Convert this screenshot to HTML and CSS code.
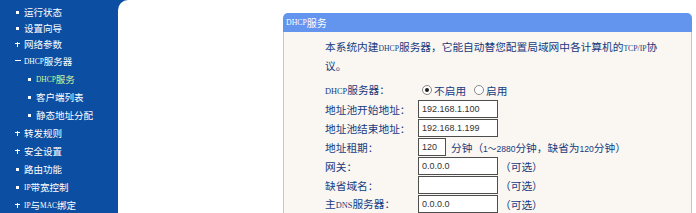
FILE: index.html
```html
<!DOCTYPE html>
<html lang="zh-CN">
<head>
<meta charset="utf-8">
<title>DHCP服务</title>
<link rel="stylesheet" href="styles.css">
</head>
<body>
<div class="page">
  <nav class="side">
    <ul class="menu menu-top">
      <li class="dot">运行状态</li>
      <li class="dot">设置向导</li>
      <li class="plus">网络参数</li>
    </ul>
    <ul class="menu">
      <li class="minus"><span class="en">DHCP</span>服务器</li>
      <li class="dot sub active"><span class="en">DHCP</span>服务</li>
      <li class="dot sub">客户端列表</li>
      <li class="dot sub">静态地址分配</li>
      <li class="plus">转发规则</li>
      <li class="plus">安全设置</li>
      <li class="dot">路由功能</li>
      <li class="dot"><span class="en">IP</span>带宽控制</li>
      <li class="plus"><span class="en">IP</span>与<span class="en">MAC</span>绑定</li>
    </ul>
  </nav>
  <main class="content">
    <section class="panel">
      <div class="panel-head"><span class="en">DHCP</span>服务</div>
      <div class="panel-body">
        <p class="desc">本系统内建<span class="en">DHCP</span>服务器，它能自动替您配置局域网中各计算机的<span class="en">TCP/IP</span>协<br>议。</p>
        <div class="form">
          <div class="label"><span class="en">DHCP</span>服务器：</div>
          <div class="field">
            <label class="opt"><span class="radio on"></span>不启用</label>
            <label class="opt"><span class="radio"></span>启用</label>
          </div>

          <div class="label">地址池开始地址：</div>
          <div class="field"><input class="box" type="text" value="192.168.1.100"></div>

          <div class="label">地址池结束地址：</div>
          <div class="field"><input class="box" type="text" value="192.168.1.199"></div>

          <div class="label">地址租期：</div>
          <div class="field"><input class="box short" type="text" value="120"><span class="note">分钟（<span class="num">1～2880</span>分钟，缺省为<span class="num">120</span>分钟）</span></div>

          <div class="label">网关：</div>
          <div class="field"><input class="box" type="text" value="0.0.0.0"><span class="opt-note">（可选）</span></div>

          <div class="label">缺省域名：</div>
          <div class="field"><input class="box" type="text" value=""><span class="opt-note">（可选）</span></div>

          <div class="label">主<span class="en">DNS</span>服务器：</div>
          <div class="field"><input class="box" type="text" value="0.0.0.0"><span class="opt-note">（可选）</span></div>
        </div>
      </div>
    </section>
  </main>
</div>
</body>
</html>
```

FILE: styles.css
```css
html, body {
  margin: 0;
  padding: 0;
  height: 213px;
  overflow: hidden;
  background: #0b4ea2;
}

.page {
  display: flex;
  height: 213px;
  font-family: "Noto Sans CJK SC", "Liberation Sans", sans-serif;
}

.en {
  font-family: "Liberation Serif", "Noto Sans CJK SC", serif;
  font-size: 0.78em;
}

.num {
  font-family: "Liberation Sans", "Noto Sans CJK SC", sans-serif;
  font-size: 0.8em;
}

/* sidebar */
.side {
  width: 118px;
  flex: none;
  color: #ffffff;
  font-size: 9.5px;
  padding-top: 4px;
}

.menu {
  list-style: none;
  margin: 0;
  padding: 0;
}

.menu li {
  display: flex;
  align-items: center;
  height: 18px;
  white-space: nowrap;
}

.menu-top li {
  height: 16px;
}

.menu li::before {
  content: "";
  flex: none;
  width: 5px;
  height: 5px;
  margin-left: 15px;
  margin-right: 4px;
}

.menu li.sub::before {
  margin-left: 27px;
}

.menu li.dot::before {
  background: radial-gradient(circle, #ffffff 0 1.6px, transparent 1.9px);
}

.menu li.plus::before {
  background:
    linear-gradient(#ffffff, #ffffff) center / 5px 1.4px no-repeat,
    linear-gradient(#ffffff, #ffffff) center / 1.4px 5px no-repeat;
}

.menu li.minus::before {
  background: linear-gradient(#ffffff, #ffffff) center / 6px 1.4px no-repeat;
  width: 6px;
  margin-right: 3px;
}

.menu li.active {
  color: #d6f29c;
}

/* content */
.content {
  flex: 1;
  background: #ffffff;
  border-top-left-radius: 10px;
  padding: 13px 4px 0 165px;
  overflow: hidden;
}

.panel {
  width: 409px;
}

.panel-head {
  height: 19px;
  display: flex;
  align-items: center;
  padding-left: 3px;
  background: #6394ee;
  border-radius: 5px 5px 0 0;
  color: #ffffff;
  font-size: 10px;
}

.panel-body {
  background: #faf6f1;
  border-left: 1px solid #f0c07c;
  border-right: 1px solid #f0c07c;
  padding: 5.5px 0 0 41px;
  height: 200px;
  color: #163a7e;
  font-size: 10.7px;
}

.desc {
  margin: 0;
  line-height: 17px;
}

.desc .en {
  font-size: 0.72em;
}

.form {
  margin-top: 7px;
  display: grid;
  grid-template-columns: 93px 1fr;
  grid-auto-rows: 19px;
  align-items: center;
}

.label {
  white-space: nowrap;
  line-height: 19px;
}

.field {
  display: flex;
  align-items: center;
  white-space: nowrap;
}

.box {
  box-sizing: border-box;
  width: 80px;
  height: 18px;
  margin: 0;
  padding: 0 0 0 3px;
  border: 1px solid #4e4e4e;
  background: #ffffff;
  color: #333333;
  font-family: "Liberation Sans", sans-serif;
  font-size: 9px;
  outline: none;
}

.box.short {
  width: 28px;
}

.note {
  margin-left: 5px;
}

.opt-note {
  margin-left: 2px;
}

.opt {
  display: flex;
  align-items: center;
  margin-left: 4px;
  margin-right: 4px;
}

.radio {
  box-sizing: border-box;
  width: 10px;
  height: 10px;
  border-radius: 50%;
  border: 1px solid #8a8a8a;
  background: #ffffff;
  margin-right: 2px;
  position: relative;
}

.radio.on::after {
  content: "";
  position: absolute;
  left: 2px;
  top: 2px;
  width: 4px;
  height: 4px;
  border-radius: 50%;
  background: #1e1e1e;
}
```
